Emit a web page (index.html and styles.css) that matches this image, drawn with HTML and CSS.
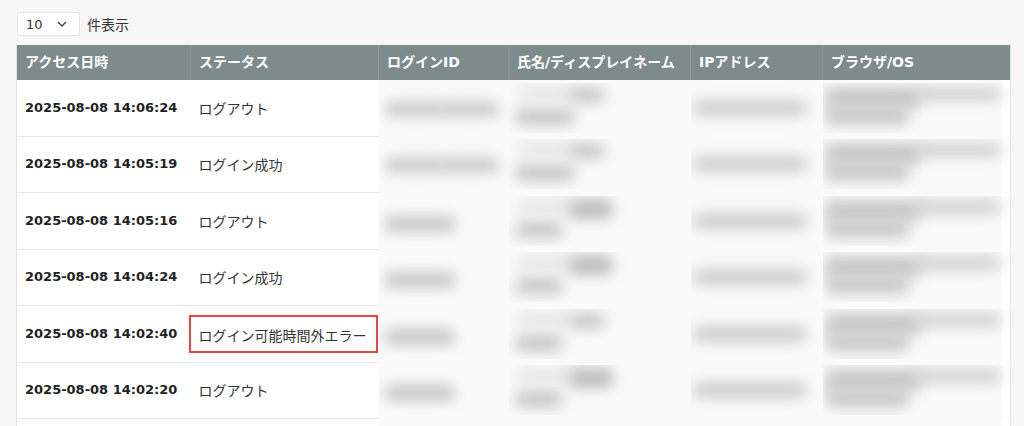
FILE: index.html
```html
<!DOCTYPE html>
<html lang="ja">
<head>
    <meta charset="UTF-8">
    <meta name="viewport" content="width=device-width, initial-scale=1.0">
    <title>アクセスログ</title>
    <link rel="stylesheet" href="styles.css">
</head>
<body>
    <div class="toolbar">
        <div class="page-size">
            <span>10</span>
            <svg class="chevron" width="10" height="6" viewBox="0 0 10 6">
                <path d="M1 1 L5 5 L9 1" fill="none" stroke="#444" stroke-width="1.4"/>
            </svg>
        </div>
        <span class="page-size-label">件表示</span>
    </div>

    <table class="log-table">
        <colgroup>
            <col class="c-date">
            <col class="c-status">
            <col class="c-id">
            <col class="c-name">
            <col class="c-ip">
            <col class="c-ua">
        </colgroup>
        <thead>
            <tr>
                <th>アクセス日時</th>
                <th>ステータス</th>
                <th>ログインID</th>
                <th>氏名/ディスプレイネーム</th>
                <th>IPアドレス</th>
                <th>ブラウザ/OS</th>
            </tr>
        </thead>
        <tbody>
            <tr>
                <td class="date">2025-08-08 14:06:24</td>
                <td class="status">ログアウト</td>
                <td class="masked"><div class="smear id"><i class="b id-a"></i><i class="b id-b"></i></div></td>
                <td class="masked"><div class="smear name"><i class="b nm-ghost"></i><i class="b nm-top"></i><i class="b nm-low"></i></div></td>
                <td class="masked"><div class="smear ip"><i class="b ip-line"></i></div></td>
                <td class="masked last"><div class="smear ua"><i class="b ua-top"></i><i class="b ua-right"></i><i class="b ua-low"></i></div></td>
            </tr>
            <tr>
                <td class="date">2025-08-08 14:05:19</td>
                <td class="status">ログイン成功</td>
                <td class="masked"><div class="smear id"><i class="b id-a"></i><i class="b id-b"></i></div></td>
                <td class="masked"><div class="smear name"><i class="b nm-ghost"></i><i class="b nm-top"></i><i class="b nm-low"></i></div></td>
                <td class="masked"><div class="smear ip"><i class="b ip-line"></i></div></td>
                <td class="masked last"><div class="smear ua"><i class="b ua-top"></i><i class="b ua-right"></i><i class="b ua-low"></i></div></td>
            </tr>
            <tr>
                <td class="date">2025-08-08 14:05:16</td>
                <td class="status">ログアウト</td>
                <td class="masked"><div class="smear id"><i class="b id-s"></i></div></td>
                <td class="masked"><div class="smear name"><i class="b nm-ghost"></i><i class="b nm-top big"></i><i class="b nm-low short"></i></div></td>
                <td class="masked"><div class="smear ip"><i class="b ip-line"></i></div></td>
                <td class="masked last"><div class="smear ua"><i class="b ua-top"></i><i class="b ua-right"></i><i class="b ua-low"></i></div></td>
            </tr>
            <tr>
                <td class="date">2025-08-08 14:04:24</td>
                <td class="status">ログイン成功</td>
                <td class="masked"><div class="smear id"><i class="b id-s"></i></div></td>
                <td class="masked"><div class="smear name"><i class="b nm-ghost"></i><i class="b nm-top big"></i><i class="b nm-low short"></i></div></td>
                <td class="masked"><div class="smear ip"><i class="b ip-line"></i></div></td>
                <td class="masked last"><div class="smear ua"><i class="b ua-top"></i><i class="b ua-right"></i><i class="b ua-low"></i></div></td>
            </tr>
            <tr>
                <td class="date">2025-08-08 14:02:40</td>
                <td class="status"><div class="flag">ログイン可能時間外エラー</div></td>
                <td class="masked"><div class="smear id"><i class="b id-s"></i></div></td>
                <td class="masked"><div class="smear name"><i class="b nm-ghost"></i><i class="b nm-top"></i><i class="b nm-low short"></i></div></td>
                <td class="masked"><div class="smear ip"><i class="b ip-line"></i></div></td>
                <td class="masked last"><div class="smear ua"><i class="b ua-top"></i><i class="b ua-right"></i><i class="b ua-low"></i></div></td>
            </tr>
            <tr>
                <td class="date">2025-08-08 14:02:20</td>
                <td class="status">ログアウト</td>
                <td class="masked"><div class="smear id"><i class="b id-s"></i></div></td>
                <td class="masked"><div class="smear name"><i class="b nm-ghost"></i><i class="b nm-top big"></i><i class="b nm-low short"></i></div></td>
                <td class="masked"><div class="smear ip"><i class="b ip-line"></i></div></td>
                <td class="masked last"><div class="smear ua"><i class="b ua-top"></i><i class="b ua-right"></i><i class="b ua-low"></i></div></td>
            </tr>
            <tr class="tail">
                <td></td>
                <td></td>
                <td class="masked"></td>
                <td class="masked"></td>
                <td class="masked"></td>
                <td class="masked last"></td>
            </tr>
        </tbody>
    </table>
</body>
</html>
```

FILE: styles.css
```css
body {
    font-family: "DejaVu Sans", "Noto Sans CJK JP", sans-serif;
    background-color: #f7f7f7;
    color: #333;
    margin: 0;
    padding: 12px 0 0 16px;
}
.toolbar {
    display: flex;
    align-items: center;
    gap: 6px;
    height: 24px;
}
.page-size {
    display: flex;
    align-items: center;
    justify-content: space-between;
    box-sizing: border-box;
    width: 63px;
    height: 24px;
    margin-left: 1px;
    padding: 0 12px 0 8px;
    background: #fff;
    border: 1px solid #e2e2e2;
    border-radius: 3px;
    font-size: 13px;
    color: #333;
}
.page-size-label {
    font-family: "Noto Sans CJK JP", sans-serif;
    font-size: 14px;
    line-height: 24px;
    margin-left: 1px;
}
.log-table {
    margin-top: 9px;
    width: 994px;
    table-layout: fixed;
    border-collapse: collapse;
    background: #fff;
    border-left: 1px solid #e4e4e4;
    border-right: 1px solid #e4e4e4;
}
.c-date { width: 174px; }
.c-status { width: 188px; }
.c-id { width: 130px; }
.c-name { width: 182px; }
.c-ip { width: 132px; }
.c-ua { width: 188px; }
th {
    height: 35px;
    padding: 0 8px;
    text-align: left;
    font-size: 14px;
    font-weight: bold;
    color: #fff;
    background-color: #7d8b8a;
    border-right: 1px solid #889593;
    white-space: nowrap;
    line-height: 35px;
}
th:last-child {
    border-right: none;
}
td {
    height: 55.5px;
    padding: 0 8px;
    border-bottom: 1px solid #e8e8e8;
    white-space: nowrap;
    line-height: 20px;
}
.date {
    font-size: 13px;
    font-weight: bold;
    color: #222;
}
.status {
    font-family: "Noto Sans CJK JP", sans-serif;
    font-size: 14px;
    color: #333;
}
.flag {
    height: 38px;
    line-height: 36px;
    margin: 1px -7px 0 -10px;
    padding: 0 8px;
    box-sizing: border-box;
    border: 2px solid #e6454a;
}
.masked {
    padding: 0;
    background: #fafafa;
    border-bottom-color: #fafafa;
}
.masked.last {
    box-shadow: inset -8px 0 0 #fff;
}
.smear {
    position: relative;
    height: 50px;
    overflow: hidden;
}
.b {
    position: absolute;
    display: block;
    height: 14px;
    border-radius: 7px;
    background: #c6c6c6;
    filter: blur(7px);
}
.id-a { left: 6px; top: 19px; width: 60px; }
.id-b { left: 62px; top: 19px; width: 58px; }
.id-s { left: 6px; top: 20px; width: 70px; height: 16px; }
.nm-ghost { left: 8px; top: 4px; width: 56px; height: 12px; background: #e2e2e2; }
.nm-top { left: 60px; top: 4px; width: 36px; height: 16px; background: #c8c8c8; }
.nm-top.big { width: 44px; height: 20px; top: 3px; background: #bdbdbd; }
.nm-low { left: 6px; top: 26px; width: 60px; height: 16px; }
.nm-low.short { width: 48px; }
.ip-line { left: 2px; top: 17px; width: 114px; height: 16px; background: #cdcdcd; }
.ua-top { left: 2px; top: 4px; width: 96px; height: 22px; background: #c8c8c8; }
.ua-right { left: 90px; top: 4px; width: 88px; height: 14px; background: #d0d0d0; }
.ua-low { left: 2px; top: 24px; width: 84px; height: 18px; background: #c8c8c8; }
```
